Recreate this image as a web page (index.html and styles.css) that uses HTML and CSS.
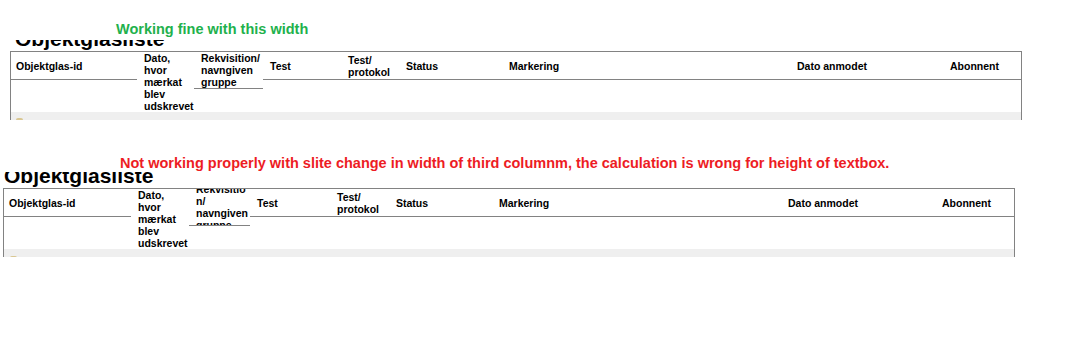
FILE: index.html
```html
<!DOCTYPE html>
<html lang="da">
<head>
<meta charset="utf-8">
<title>Objektglasliste – kolonnebredder</title>
<link rel="stylesheet" href="styles.css">
</head>
<body>
  <p class="note note--ok">Working fine with this width</p>
  <div class="shot shot--wide">
    <h2 class="title">Objektglasliste</h2>
    <div class="table">
      <div class="head">
        <div class="cell cell--first">Objektglas-id</div>
        <div class="cell">Dato, hvor mærkat blev udskrevet</div>
        <div class="cell cell--rek">Rekvisition/ navngiven gruppe</div>
        <div class="cell">Test</div>
        <div class="cell">Test/ protokol</div>
        <div class="cell">Status</div>
        <div class="cell">Markering</div>
        <div class="cell">Dato anmodet</div>
        <div class="cell">Abonnent</div>
      </div>
      <div class="row"></div>
      <div class="row row--alt"><span class="row-icon"></span></div>
    </div>
  </div>

  <p class="note note--bad">Not working properly with slite change in width of third columnm, the calculation is wrong for height of textbox.</p>
  <div class="shot shot--narrow">
    <h2 class="title">Objektglasliste</h2>
    <div class="table">
      <div class="head">
        <div class="cell cell--first">Objektglas-id</div>
        <div class="cell">Dato, hvor mærkat blev udskrevet</div>
        <div class="cell cell--rek cell--clipped">Rekvisition/ navngiven gruppe</div>
        <div class="cell">Test</div>
        <div class="cell">Test/ protokol</div>
        <div class="cell">Status</div>
        <div class="cell">Markering</div>
        <div class="cell">Dato anmodet</div>
        <div class="cell">Abonnent</div>
      </div>
      <div class="row"></div>
      <div class="row row--alt"><span class="row-icon"></span></div>
    </div>
  </div>
</body>
</html>
```
FILE: styles.css
```css
body {
  margin: 0;
  background: #fff;
  font-family: "Liberation Sans", Arial, sans-serif;
  color: #000;
}

/* captions above each table */
.note {
  margin: 0;
  font-size: 14.5px;
  font-weight: bold;
}
.note--ok {
  padding: 19px 0 0 116px;
  line-height: 21px;
  color: #22b14c;
}
.note--bad {
  margin-top: 35px;
  padding-left: 120px;
  line-height: 17px;
  color: #ed1c24;
}

/* cropped view of the list */
.shot {
  width: 1012px;
  overflow: hidden;
}
.shot--wide {
  height: 80px;
  margin-left: 10px;
}
.shot--narrow {
  height: 85px;
  margin-left: 3px;
}

.title {
  margin: 0;
  font-size: 21px;
  line-height: 24px;
  font-weight: bold;
}
.shot--wide .title {
  margin-top: -13px;
  padding-left: 5px;
}
.shot--narrow .title {
  margin-top: -8px;
  padding-left: 1px;
}

.table {
  border: 1px solid #828282;
  border-bottom: 0;
}

.head {
  display: grid;
  grid-template-rows: 28px;
  align-items: start;
}
.shot--wide .head {
  grid-template-columns: 126px 57px 69px 78px 58px 103px 288px 153px 1fr;
}
.shot--narrow .head {
  grid-template-columns: 127px 58px 61px 80px 59px 103px 289px 154px 1fr;
}

.cell {
  display: flex;
  align-items: center;
  min-height: 27px;
  padding: 0 3px 0 7px;
  border-bottom: 1px solid #828282;
  font-size: 10.5px;
  line-height: 12px;
  font-weight: bold;
}
.cell--first {
  padding-left: 5px;
}
.cell--rek {
  padding-right: 0;
  overflow-wrap: anywhere;
}
.cell--clipped {
  height: 36px;
  overflow: hidden;
}

.row {
  height: 32px;
}
/* shaded second row; positioned so it sits above overflowing header cells */
.row--alt {
  position: relative;
  height: 40px;
  padding: 6px 0 0 5px;
  box-sizing: border-box;
  background: #efefef;
}
.row-icon {
  display: block;
  width: 7px;
  height: 6px;
  border-radius: 2px 2px 0 0;
  background: #d9c793;
}
.shot--narrow .row--alt {
  padding: 7px 0 0 6px;
}
```
